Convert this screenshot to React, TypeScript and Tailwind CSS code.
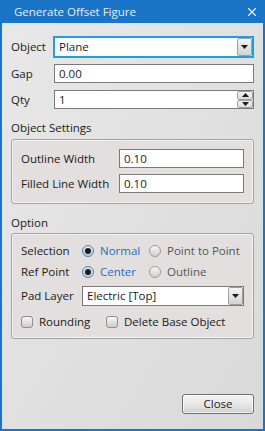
import { X } from 'lucide-react';

const font = { fontFamily: '"Open Sans", "Noto Sans", sans-serif' };

const Arrow = ({ up }: { up?: boolean }) => (
  <svg width="7" height="4" viewBox="0 0 7 4">
    <path d={up ? 'M0 4 L3.5 0 L7 4 Z' : 'M0 0 L7 0 L3.5 4 Z'} fill="#1a1a1a" />
  </svg>
);

const TextBox = ({ value, className = '' }: { value: string; className?: string }) => (
  <div className={`flex h-[19px] items-center border border-[#7a7a7a] bg-white pl-[4px] ${className}`}>{value}</div>
);

const ComboBox = ({ value, focused, className = '' }: { value: string; focused?: boolean; className?: string }) => (
  <div
    className={`flex items-stretch bg-white ${
      focused ? 'h-[22px] border-2 border-[#1d9ee8]' : 'h-[20px] border border-[#7a7a7a]'
    } ${className}`}
  >
    <div className="flex flex-1 items-center pl-[4px]">{value}</div>
    <div className="flex w-[15px] items-center justify-center rounded-[2px] border border-[#a0a0a0] bg-gradient-to-b from-[#f4f4f4] to-[#d4d4d4]">
      <Arrow />
    </div>
  </div>
);

const Spinner = ({ value, className = '' }: { value: string; className?: string }) => (
  <div className={`flex h-[19px] items-stretch border border-[#7a7a7a] bg-white ${className}`}>
    <div className="flex flex-1 items-center pl-[4px]">{value}</div>
    <div className="flex w-[16px] flex-col">
      <div className="flex flex-1 items-center justify-center rounded-[2px] border border-[#a0a0a0] bg-gradient-to-b from-[#f6f6f6] to-[#dadada]">
        <Arrow up />
      </div>
      <div className="flex flex-1 items-center justify-center rounded-[2px] border border-[#a0a0a0] bg-gradient-to-b from-[#f6f6f6] to-[#dadada]">
        <Arrow />
      </div>
    </div>
  </div>
);

const Radio = ({ label, checked }: { label: string; checked?: boolean }) => (
  <div className="flex items-center gap-[6px]">
    <div
      className={`flex h-[12px] w-[12px] items-center justify-center rounded-full border ${
        checked ? 'border-[#5a7fa6] bg-gradient-to-b from-[#dbe9f5] to-[#b9cde0]' : 'border-[#9a9a9a] bg-gradient-to-b from-[#f6f6f6] to-[#cfcfcf]'
      }`}
    >
      {checked && <div className="h-[6px] w-[6px] rounded-full bg-[#1c1c1c]" />}
    </div>
    <span className={checked ? 'text-[#1b6ec2]' : 'text-[#555]'}>{label}</span>
  </div>
);

const Checkbox = ({ label }: { label: string }) => (
  <div className="flex items-center gap-[6px]">
    <div className="h-[12px] w-[12px] rounded-[3px] border border-[#8e8e8e] bg-gradient-to-b from-[#f8f8f8] to-[#cdcdcd]" />
    <span>{label}</span>
  </div>
);

const Group = ({ children, className = '' }: { children: React.ReactNode; className?: string }) => (
  <div
    className={`rounded-[3px] border border-[#a3a3a3] bg-[#e3dfde] shadow-[inset_0_0_0_1px_rgba(255,255,255,0.6)] ${className}`}
  >
    {children}
  </div>
);

export default function App() {
  return (
    <div
      className="flex h-[431px] w-[265px] flex-col bg-[#1a74c7] text-[11.5px] leading-[16px] text-[#1a1a1a]"
      style={font}
    >
      {/* Title bar */}
      <div className="flex h-[23px] shrink-0 items-center justify-between pl-[14px] pr-[6px] text-[#e4eef9]">
        <span className="text-[11.5px]">Generate Offset Figure</span>
        <X className="h-[14px] w-[14px]" strokeWidth={2} />
      </div>

      {/* Body */}
      <div className="mx-[2px] mb-[2px] flex flex-1 flex-col bg-gradient-to-br from-[#e8e8e8] to-[#d9d9d9] px-[9px] pb-[15px]">
        <div className="mt-[13px] flex items-center">
          <span className="w-[42px]">Object</span>
          <ComboBox value="Plane" focused className="flex-1" />
        </div>
        <div className="mt-[6px] flex items-center">
          <span className="w-[43px]">Gap</span>
          <TextBox value="0.00" className="flex-1" />
        </div>
        <div className="mt-[7px] flex items-center">
          <span className="w-[43px]">Qty</span>
          <Spinner value="1" className="flex-1" />
        </div>

        <div className="mt-[11px]">Object Settings</div>
        <Group className="mt-[3px] px-[9px] pb-[10px] pt-[9px]">
          <div className="flex items-center">
            <span className="w-[98px]">Outline Width</span>
            <TextBox value="0.10" className="flex-1" />
          </div>
          <div className="mt-[6px] flex items-center">
            <span className="w-[98px]">Filled Line Width</span>
            <TextBox value="0.10" className="flex-1" />
          </div>
        </Group>

        <div className="mt-[11px]">Option</div>
        <Group className="mt-[2px] px-[9px] pb-[8px] pt-[8px]">
          <div className="flex h-[18px] items-center">
            <span className="w-[61px]">Selection</span>
            <div className="w-[67px]">
              <Radio label="Normal" checked />
            </div>
            <Radio label="Point to Point" />
          </div>
          <div className="mt-[3px] flex h-[18px] items-center">
            <span className="w-[61px]">Ref Point</span>
            <div className="w-[67px]">
              <Radio label="Center" checked />
            </div>
            <Radio label="Outline" />
          </div>
          <div className="mt-[5px] flex items-center">
            <span className="w-[61px]">Pad Layer</span>
            <ComboBox value="Electric [Top]" className="flex-1" />
          </div>
          <div className="mt-[8px] flex items-center">
            <div className="w-[85px]">
              <Checkbox label="Rounding" />
            </div>
            <Checkbox label="Delete Base Object" />
          </div>
        </Group>

        <div className="mt-auto flex justify-end">
          <button className="h-[20px] w-[72px] rounded-[3px] border border-[#707070] bg-gradient-to-b from-[#f3f3f3] via-[#e8e8e8] to-[#d0d0d0] shadow-[inset_0_0_0_1px_rgba(255,255,255,0.7)]">
            Close
          </button>
        </div>
      </div>
    </div>
  );
}
